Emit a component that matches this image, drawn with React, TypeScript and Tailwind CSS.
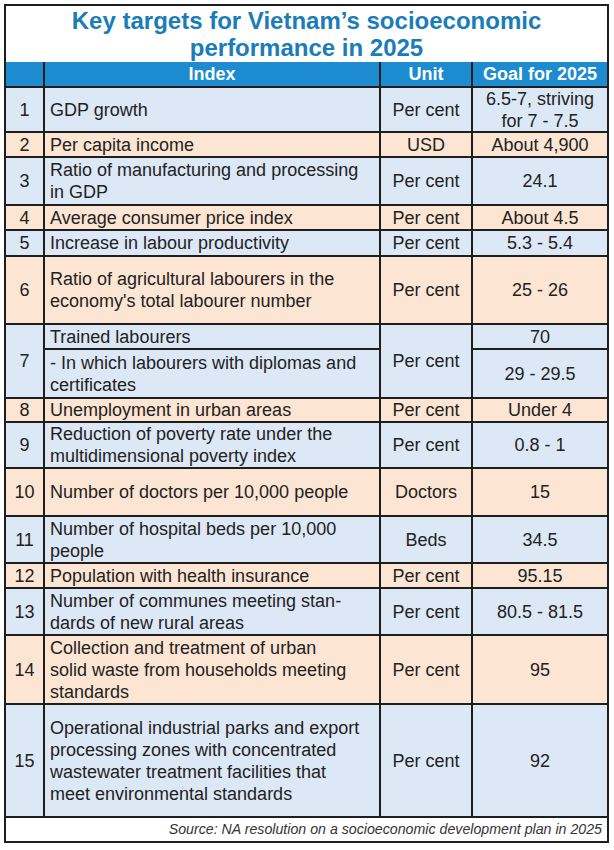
import React from "react";

const BLUE = "bg-[#dce8f5]";
const PEACH = "bg-[#fce5d3]";

type Row = {
  n: string;
  idx: React.ReactNode;
  unit: string;
  goal: React.ReactNode;
  bg: string;
};

const rows: Row[] = [
  { n: "1", idx: "GDP growth", unit: "Per cent", goal: <>6.5-7, striving<br />for 7 - 7.5</>, bg: BLUE },
  { n: "2", idx: "Per capita income", unit: "USD", goal: "About 4,900", bg: PEACH },
  { n: "3", idx: <>Ratio of manufacturing and processing<br />in GDP</>, unit: "Per cent", goal: "24.1", bg: BLUE },
  { n: "4", idx: "Average consumer price index", unit: "Per cent", goal: "About 4.5", bg: PEACH },
  { n: "5", idx: "Increase in labour productivity", unit: "Per cent", goal: "5.3 - 5.4", bg: BLUE },
  { n: "6", idx: <>Ratio of agricultural labourers in the<br />economy's total labourer number</>, unit: "Per cent", goal: "25 - 26", bg: PEACH },
];

const rows2: Row[] = [
  { n: "8", idx: "Unemployment in urban areas", unit: "Per cent", goal: "Under 4", bg: PEACH },
  { n: "9", idx: <>Reduction of poverty rate under the<br />multidimensional poverty index</>, unit: "Per cent", goal: "0.8 - 1", bg: BLUE },
  { n: "10", idx: "Number of doctors per 10,000 people", unit: "Doctors", goal: "15", bg: PEACH },
  { n: "11", idx: <>Number of hospital beds per 10,000<br />people</>, unit: "Beds", goal: "34.5", bg: BLUE },
  { n: "12", idx: "Population with health insurance", unit: "Per cent", goal: "95.15", bg: PEACH },
  { n: "13", idx: <>Number of communes meeting stan-<br />dards of new rural areas</>, unit: "Per cent", goal: "80.5 - 81.5", bg: BLUE },
  { n: "14", idx: <>Collection and treatment of urban<br />solid waste from households meeting<br />standards</>, unit: "Per cent", goal: "95", bg: PEACH },
  { n: "15", idx: <>Operational industrial parks and export<br />processing zones with concentrated<br />wastewater treatment facilities that<br />meet environmental standards</>, unit: "Per cent", goal: "92", bg: BLUE },
];

function Cells({ r }: { r: Row }) {
  return (
    <>
      <div className={`${r.bg} flex items-center justify-center`}>{r.n}</div>
      <div className={`${r.bg} flex items-center pl-[5px]`}>{r.idx}</div>
      <div className={`${r.bg} flex items-center justify-center text-center`}>{r.unit}</div>
      <div className={`${r.bg} flex items-center justify-center text-center`}>{r.goal}</div>
    </>
  );
}

export default function App() {
  return (
    <div className="w-[614px] h-[850px] bg-white pt-[4px] pl-[4px]" style={{ fontFamily: '"Liberation Sans", Arial, sans-serif' }}>
      <div className="w-[605px] border-2 border-[#1e1e1e] bg-white">
        <div className="h-[56px] flex items-center justify-center text-center text-[24px] leading-[27px] font-bold text-[#1a7cb8]">
          Key targets for Vietnam’s socioeconomic
          <br />
          performance in 2025
        </div>
        <div className="grid grid-cols-[37px_334px_90px_134px] grid-rows-[24px_43px_23px_46px_23px_24px_66px_23px_47px_22px_44px_46px_45px_23px_45px_67px_111px] gap-[2px] bg-[#1e1e1e] border-b-2 border-[#1e1e1e] text-[18px] leading-[22px] text-[#222]">
          <div className="bg-[#1d8bd0]" />
          <div className="bg-[#1d8bd0] flex items-center justify-center text-white font-bold">Index</div>
          <div className="bg-[#1d8bd0] flex items-center justify-center text-white font-bold">Unit</div>
          <div className="bg-[#1d8bd0] flex items-center justify-center text-white font-bold">Goal for 2025</div>
          {rows.map((r) => (
            <Cells key={r.n} r={r} />
          ))}
          <div className={`${BLUE} row-span-2 flex items-center justify-center`}>7</div>
          <div className={`${BLUE} flex items-center pl-[5px]`}>Trained labourers</div>
          <div className={`${BLUE} row-span-2 flex items-center justify-center`}>Per cent</div>
          <div className={`${BLUE} flex items-center justify-center`}>70</div>
          <div className={`${BLUE} flex items-center pl-[5px]`}>
            - In which labourers with diplomas and
            <br />
            certificates
          </div>
          <div className={`${BLUE} flex items-center justify-center`}>29 - 29.5</div>
          {rows2.map((r) => (
            <Cells key={r.n} r={r} />
          ))}
        </div>
        <div className="h-[23px] flex items-center justify-end pr-[5px] italic text-[14.2px] text-[#333]">
          Source: NA resolution on a socioeconomic development plan in 2025
        </div>
      </div>
    </div>
  );
}
